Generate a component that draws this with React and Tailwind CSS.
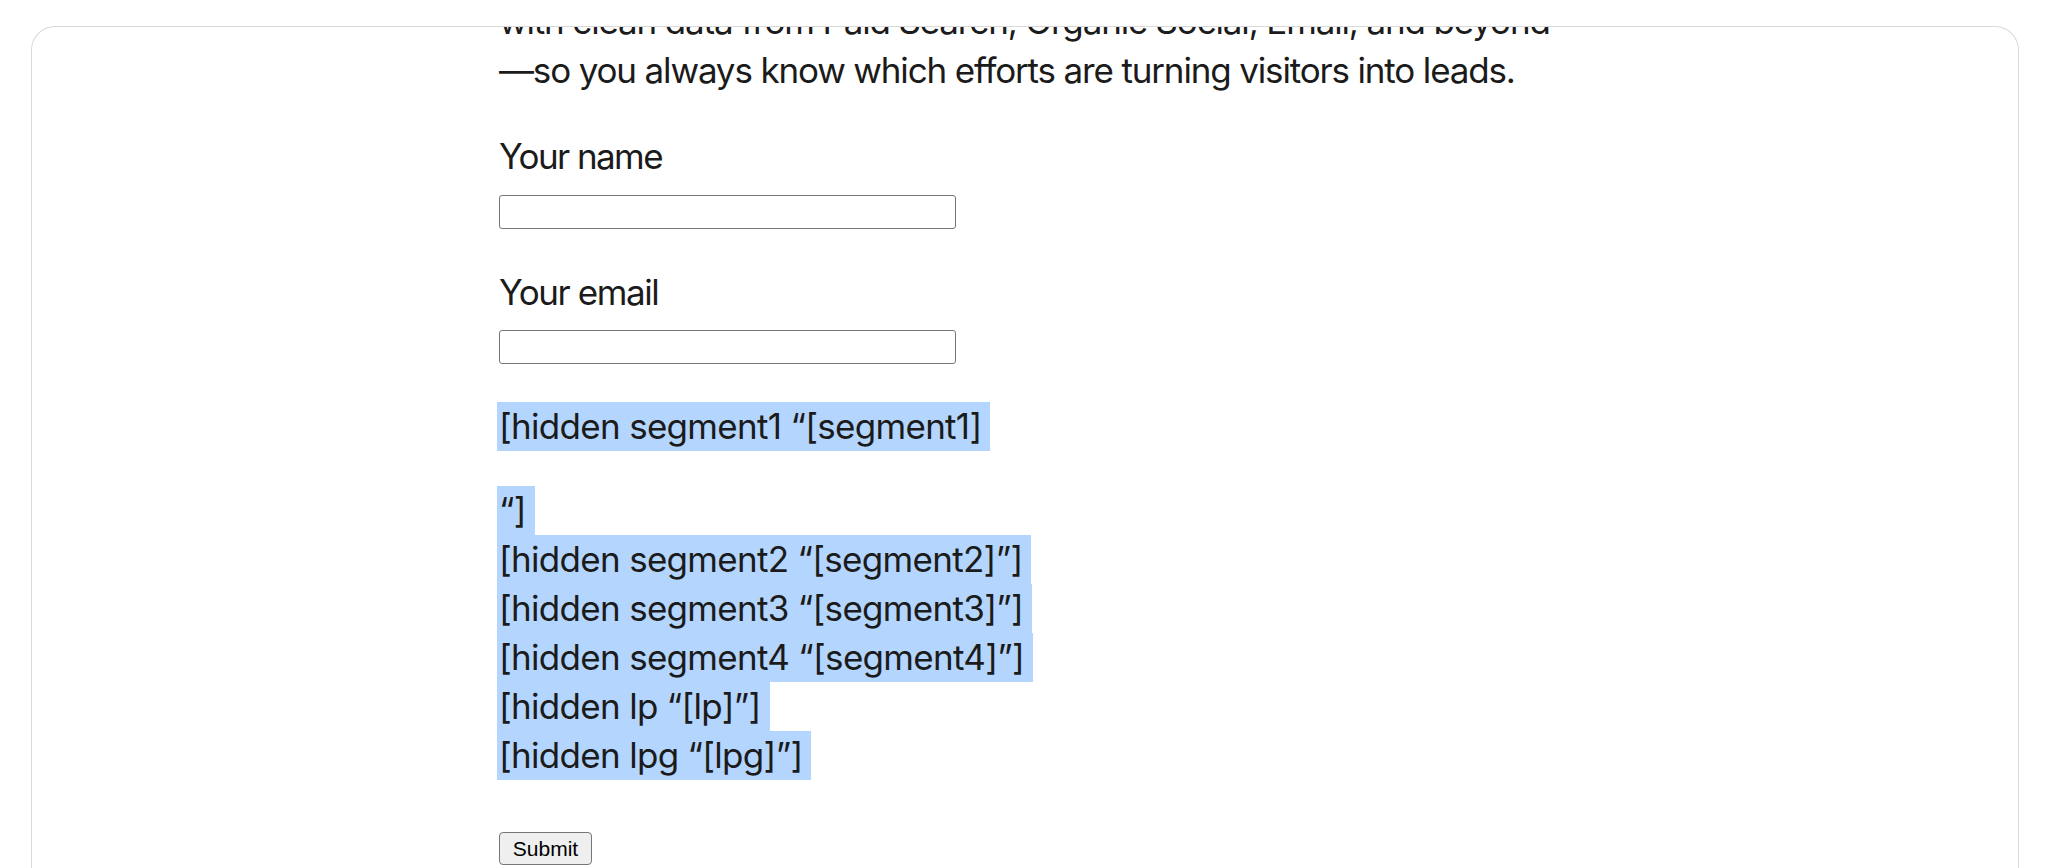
import React from "react";

const HIDDEN_LINES = [
  "[hidden segment2 “[segment2]”]",
  "[hidden segment3 “[segment3]”]",
  "[hidden segment4 “[segment4]”]",
  "[hidden lp “[lp]”]",
  "[hidden lpg “[lpg]”]",
];

function Highlight({ children }) {
  return (
    <div className="-ml-[2px] w-fit bg-[#b4d6fe] pl-[2px] pr-[9px]">
      {children}
    </div>
  );
}

export default function App() {
  return (
    <div className="min-h-screen bg-white pl-[31px] pr-[29px] pt-[26px]">
      {/* card, content is scrolled so the first line is cut at the top */}
      <div className="h-[842px] overflow-hidden rounded-t-[24px] border border-b-0 border-[#d9d9d9] bg-white">
        <div className="-mt-[30px] pl-[467px] font-[family-name:Inter,sans-serif] text-[35px] leading-[49px] tracking-[-0.02em] text-[#1b1b1b]">
          <p className="tracking-[-0.033em]">
            <span className="block">
              with clean data from Paid Search, Organic Social, Email, and beyond
            </span>
            <span className="block">
              —so you always know which efforts are turning visitors into leads.
            </span>
          </p>

          <form className="mt-[37px]" onSubmit={(e) => e.preventDefault()}>
            <label className="block tracking-[-0.045em]">Your name</label>
            <input
              type="text"
              className="mt-[14px] block h-[34px] w-[457px] rounded-[3px] border border-[#767676] bg-white"
            />

            <label className="mt-[39px] block tracking-[-0.04em]">Your email</label>
            <input
              type="email"
              className="mt-[13px] block h-[34px] w-[457px] rounded-[3px] border border-[#767676] bg-white"
            />

            <div className="mt-[38px]">
              <Highlight>[hidden segment1 “[segment1]</Highlight>
              <div className="h-[35px]" />
              <Highlight>“]</Highlight>
              {HIDDEN_LINES.map((line) => (
                <Highlight key={line}>{line}</Highlight>
              ))}
            </div>

            <button
              type="submit"
              className="mt-[52px] block h-[33px] w-[93px] rounded-[4px] border border-[#767676] bg-[#efefef] font-[family-name:'Liberation_Sans',Arial,sans-serif] text-[21px] leading-none tracking-normal text-black"
            >
              Submit
            </button>
          </form>
        </div>
      </div>
    </div>
  );
}
